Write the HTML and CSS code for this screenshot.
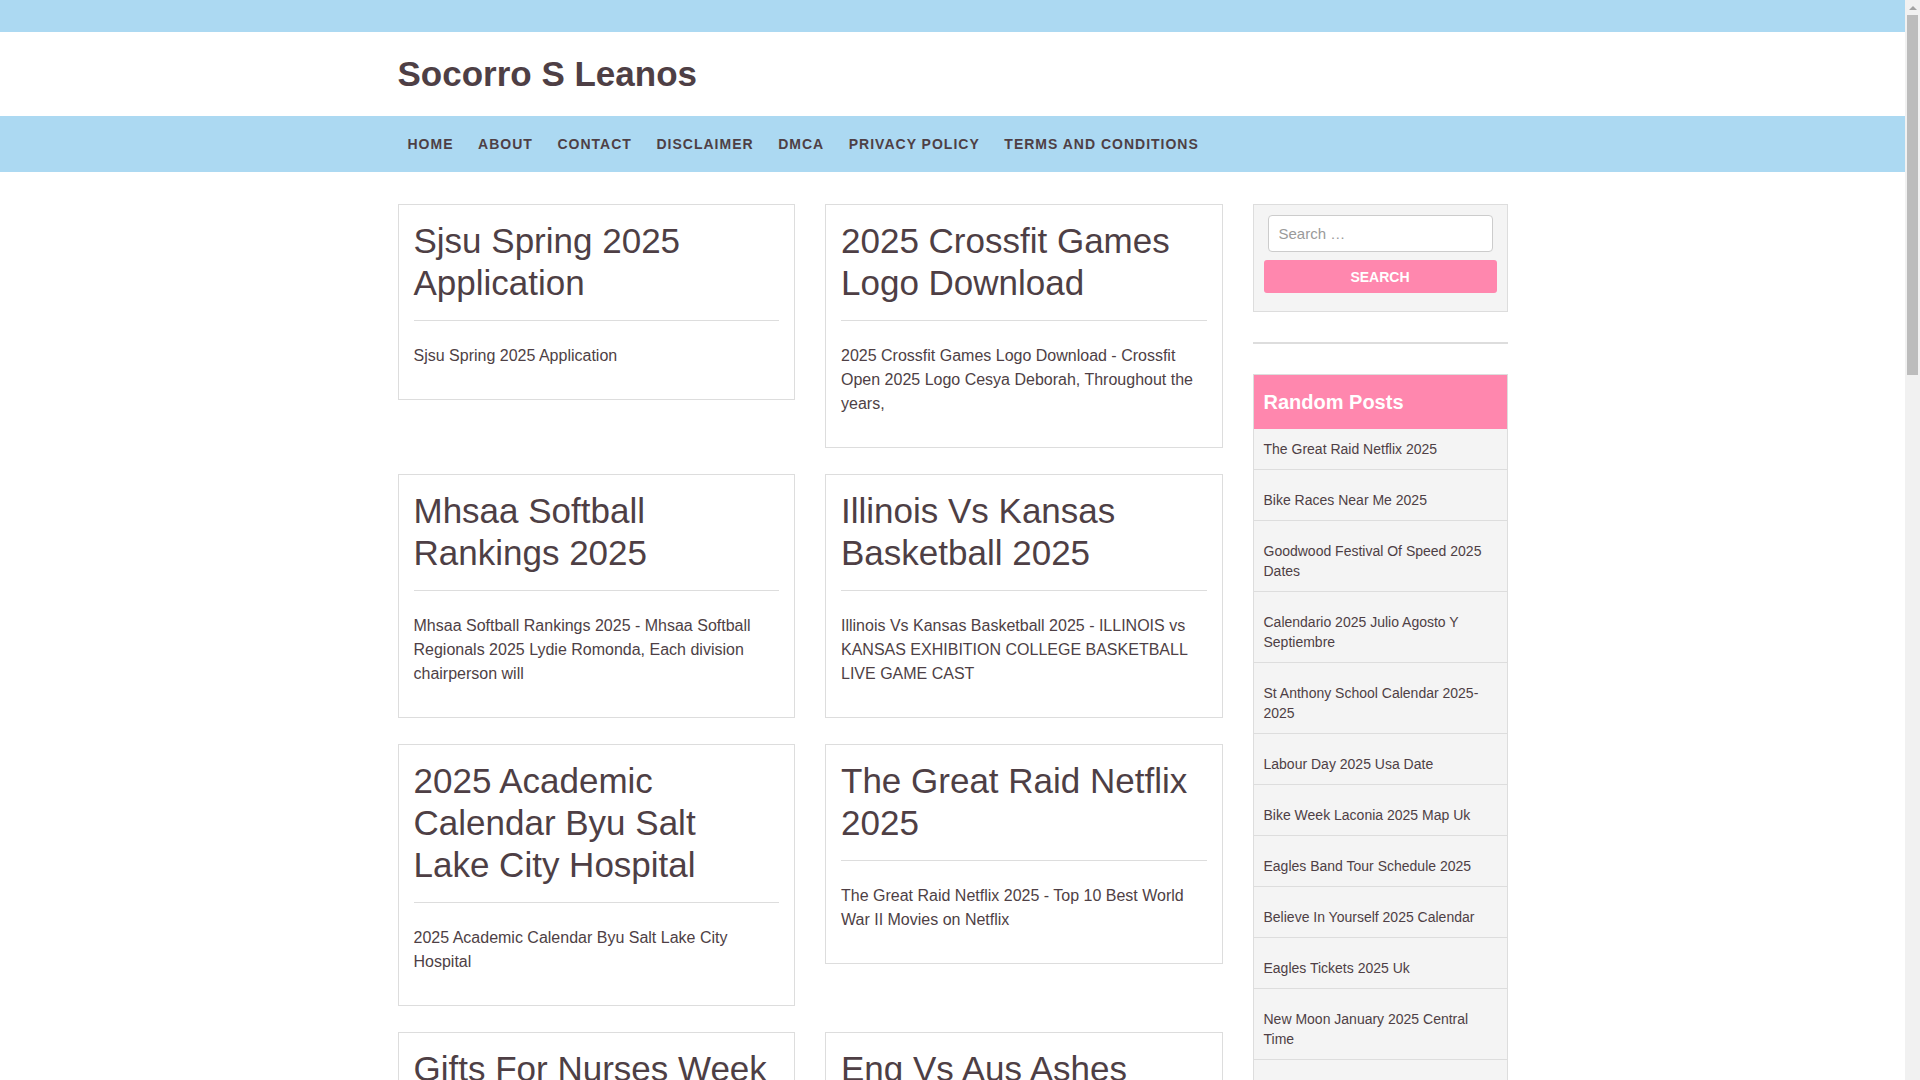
FILE: index.html
```html
<!DOCTYPE html>
<html lang="en">
<head>
<meta charset="utf-8">
<title>Socorro S Leanos</title>
<link rel="stylesheet" href="styles.css">
</head>
<body>
<div class="topbar"></div>
<header class="site-header">
  <div class="container">
    <p class="site-title">Socorro S Leanos</p>
  </div>
</header>
<nav class="main-nav">
  <div class="container">
    <ul class="menu">
      <li><a href="#">Home</a></li>
      <li><a href="#">About</a></li>
      <li><a href="#">Contact</a></li>
      <li><a href="#">Disclaimer</a></li>
      <li><a href="#">DMCA</a></li>
      <li><a href="#">Privacy Policy</a></li>
      <li><a href="#">Terms and Conditions</a></li>
    </ul>
  </div>
</nav>
<div class="container site-content">
  <main class="posts">
    <article class="card"><h2>Sjsu Spring 2025 Application</h2><p>Sjsu Spring 2025 Application</p></article>
    <article class="card"><h2>2025 Crossfit Games Logo Download</h2><p>2025 Crossfit Games Logo Download - Crossfit Open 2025 Logo Cesya Deborah, Throughout the years,</p></article>
    <article class="card"><h2>Mhsaa Softball Rankings 2025</h2><p>Mhsaa Softball Rankings 2025 - Mhsaa Softball Regionals 2025 Lydie Romonda, Each division chairperson will</p></article>
    <article class="card"><h2>Illinois Vs Kansas Basketball 2025</h2><p>Illinois Vs Kansas Basketball 2025 - ILLINOIS vs KANSAS EXHIBITION COLLEGE BASKETBALL LIVE GAME CAST</p></article>
    <article class="card"><h2>2025 Academic Calendar Byu Salt Lake City Hospital</h2><p>2025 Academic Calendar Byu Salt Lake City Hospital</p></article>
    <article class="card"><h2>The Great Raid Netflix 2025</h2><p>The Great Raid Netflix 2025 - Top 10 Best World War II Movies on Netflix</p></article>
    <article class="card"><h2>Gifts For Nurses Week 2025</h2><p>Gifts For Nurses Week 2025 - Nurses Week Gift Ideas For Your Team, Show them how much you care</p></article>
    <article class="card"><h2>Eng Vs Aus Ashes 2025</h2><p>Eng Vs Aus Ashes 2025 - Ashes Series Schedule, Fixtures And Venues</p></article>
    <article class="card"><h2>Bike Races Near Me 2025</h2><p>Bike Races Near Me 2025 - Find Cycling Events And Races Near You</p></article>
    <article class="card"><h2>Labour Day 2025 Usa Date</h2><p>Labour Day 2025 Usa Date</p></article>
    <article class="card"><h2>Eagles Band Tour Schedule 2025</h2><p>Eagles Band Tour Schedule 2025 - The Eagles Announce Farewell Tour Dates, Tickets on sale now</p></article>
    <article class="card"><h2>Believe In Yourself 2025 Calendar</h2><p>Believe In Yourself 2025 Calendar</p></article>
    <article class="card"><h2>Bike Week Laconia 2025 Map Uk</h2><p>Bike Week Laconia 2025 Map Uk - Laconia Motorcycle Week Official Map</p></article>
    <article class="card"><h2>Eagles Tickets 2025 Uk</h2><p>Eagles Tickets 2025 Uk - Eagles Live In London, Tickets And Dates</p></article>
    <article class="card"><h2>New Moon January 2025 Central Time</h2><p>New Moon January 2025 Central Time - Moon Phases Calendar For January</p></article>
    <article class="card"><h2>Goodwood Festival Of Speed 2025 Dates</h2><p>Goodwood Festival Of Speed 2025 Dates</p></article>
    <article class="card"><h2>Calendario 2025 Julio Agosto Y Septiembre</h2><p>Calendario 2025 Julio Agosto Y Septiembre - Calendario Para Imprimir</p></article>
    <article class="card"><h2>St Anthony School Calendar 2025-2025</h2><p>St Anthony School Calendar 2025-2025</p></article>
    <article class="card"><h2>Nfl Draft 2025 Order Of Picks</h2><p>Nfl Draft 2025 Order Of Picks - Full Draft Order For Every Round</p></article>
    <article class="card"><h2>Chinese New Year 2025 Animal</h2><p>Chinese New Year 2025 Animal - Year Of The Snake Meaning And Traditions</p></article>
  </main>
  <aside class="sidebar">
    <section class="widget-search">
      <form class="search-form">
        <input class="search-field" type="search" placeholder="Search &hellip;">
        <button class="search-submit" type="button">Search</button>
      </form>
    </section>
    <hr class="sep">
    <section class="widget-random">
      <h3 class="widget-title">Random Posts</h3>
      <ul class="post-list">
        <li><a href="#">The Great Raid Netflix 2025</a></li>
        <li><a href="#">Bike Races Near Me 2025</a></li>
        <li><a href="#">Goodwood Festival Of Speed 2025 Dates</a></li>
        <li><a href="#">Calendario 2025 Julio Agosto Y Septiembre</a></li>
        <li><a href="#">St Anthony School Calendar 2025-2025</a></li>
        <li><a href="#">Labour Day 2025 Usa Date</a></li>
        <li><a href="#">Bike Week Laconia 2025 Map Uk</a></li>
        <li><a href="#">Eagles Band Tour Schedule 2025</a></li>
        <li><a href="#">Believe In Yourself 2025 Calendar</a></li>
        <li><a href="#">Eagles Tickets 2025 Uk</a></li>
        <li><a href="#">New Moon January 2025 Central Time</a></li>
        <li><a href="#">Mhsaa Softball Rankings 2025</a></li>
        <li><a href="#">Sjsu Spring 2025 Application</a></li>
        <li><a href="#">2025 Crossfit Games Logo Download</a></li>
        <li><a href="#">Illinois Vs Kansas Basketball 2025</a></li>
      </ul>
    </section>
  </aside>
</div>
<footer class="site-footer">
  <div class="container">
    <p>Copyright &copy; 2025 Socorro S Leanos</p>
  </div>
</footer>
<div class="scrollbar" aria-hidden="true">
  <div class="scroll-up"></div>
  <div class="scroll-thumb"></div>
</div>
</body>
</html>
```
FILE: styles.css
```css
html, body {
  margin: 0;
  padding: 0;
}
body {
  padding-right: 15px;
  font-family: "Liberation Sans", Arial, sans-serif;
  color: #4e3f45;
  background: #fff;
}
a {
  color: #4e3f45;
  text-decoration: none;
}
.container {
  width: 1110px;
  margin: 0 auto;
}
.topbar {
  height: 32px;
  background: #acd9f2;
}
.site-header .container {
  padding: 21px 0;
}
.site-title {
  margin: 0;
  font-size: 35px;
  line-height: 42px;
  font-weight: bold;
}
.main-nav {
  background: #acd9f2;
}
.menu {
  display: flex;
  gap: 4.6px;
  list-style: none;
  margin: 0;
  padding: 0;
}
.menu a {
  display: block;
  padding: 0 10px;
  line-height: 56px;
  font-size: 14px;
  font-weight: bold;
  letter-spacing: 1px;
  text-transform: uppercase;
}
.site-content {
  display: flex;
  align-items: flex-start;
  gap: 30px;
  padding-top: 32px;
}
.posts {
  width: 825px;
  flex: none;
  display: grid;
  grid-template-columns: 1fr 1fr;
  column-gap: 30px;
  row-gap: 26px;
  align-items: start;
}
.card {
  border: 1px solid #ddd;
  padding: 15px;
  background: #fff;
}
.card h2 {
  margin: 0;
  padding-bottom: 16px;
  border-bottom: 1px solid #ddd;
  font-size: 35px;
  line-height: 42px;
  font-weight: normal;
}
.card p {
  margin: 23px 0 16px;
  font-size: 16px;
  line-height: 24px;
}
.sidebar {
  width: 255px;
  flex: none;
}
.widget-search {
  background: #f4f4f4;
  border: 1px solid #ddd;
  padding: 10px 10px 18px;
}
.search-form {
  margin: 0;
}
.search-field {
  display: block;
  box-sizing: border-box;
  width: calc(100% - 8px);
  height: 37px;
  margin: 0 4px 8px;
  padding: 0 10px;
  border: 1px solid #ccc;
  border-radius: 4px;
  background: #fff;
  font-family: "Liberation Sans", Arial, sans-serif;
  font-size: 15px;
  color: #4e3f45;
}
.search-field::placeholder {
  color: #9a9a9a;
}
.search-submit {
  display: block;
  width: 100%;
  height: 33px;
  border: 0;
  border-radius: 3px;
  background: #ff87ae;
  color: #fff;
  font-family: "Liberation Sans", Arial, sans-serif;
  font-size: 14px;
  font-weight: bold;
  text-transform: uppercase;
}
.sep {
  height: 0;
  margin: 30px 0;
  border: 0;
  border-top: 2px solid #ddd;
}
.widget-random {
  border: 1px solid #ddd;
  background: #f4f4f4;
}
.widget-title {
  margin: 0;
  padding: 12px 10px;
  background: #ff87ae;
  color: #fff;
  font-size: 20px;
  line-height: 30px;
  font-weight: bold;
}
.post-list {
  list-style: none;
  margin: 0;
  padding: 0;
}
.post-list li {
  padding: 10px;
  border-bottom: 1px solid #ddd;
  font-size: 14px;
  line-height: 20px;
}
.post-list li + li {
  padding-top: 20px;
}
.post-list li:last-child {
  border-bottom: 0;
}
.site-footer {
  margin-top: 60px;
  background: #acd9f2;
}
.site-footer p {
  margin: 0;
  padding: 24px 0;
  font-size: 14px;
  text-align: center;
}
/* imitation of the browser's vertical scrollbar, drawn over the page edge */
.scrollbar {
  position: fixed;
  top: 0;
  right: 0;
  width: 15px;
  height: 100vh;
  display: flex;
  flex-direction: column;
  background: #f1f1f1;
}
.scroll-up {
  height: 15px;
  flex: none;
  display: flex;
  align-items: center;
  justify-content: center;
}
.scroll-up::before {
  content: "";
  width: 0;
  height: 0;
  border-left: 4px solid transparent;
  border-right: 4px solid transparent;
  border-bottom: 4px solid #a3a3a3;
}
.scroll-thumb {
  height: 360px;
  margin: 0 2px;
  background: #bcbcbc;
}
```
